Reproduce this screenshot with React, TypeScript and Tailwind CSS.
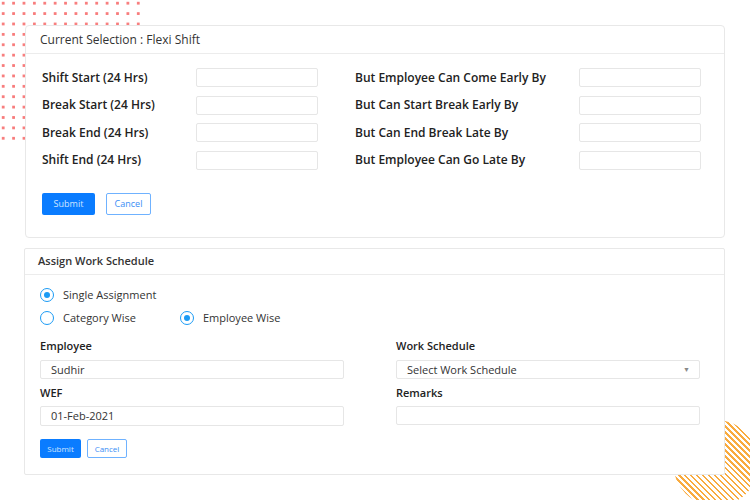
const leftRows = ["Shift Start (24 Hrs)", "Break Start (24 Hrs)", "Break End (24 Hrs)", "Shift End (24 Hrs)"];
const rightRows = [
  "But Employee Can Come Early By",
  "But Can Start Break Early By",
  "But Can End Break Late By",
  "But Employee Can Go Late By",
];

const Radio = ({ checked, label }: { checked?: boolean; label: string }) => (
  <label className="flex h-[14px] items-center gap-[9px] text-[11px] leading-[14px] text-[#333]">
    <span className="flex h-[14px] w-[14px] items-center justify-center rounded-full border-[1.5px] border-[#1b9bf5] bg-white">
      {checked && <span className="h-[6px] w-[6px] rounded-full bg-[#1b9bf5]" />}
    </span>
    {label}
  </label>
);

const FieldRow = ({ label, labelWidth }: { label: string; labelWidth: string }) => (
  <div className="flex h-[19px] items-center">
    <span className={`${labelWidth} text-[12px] font-semibold text-[#222]`}>{label}</span>
    <div className="h-[19px] w-[122px] rounded-[2px] border border-[#e6e6e6] bg-white" />
  </div>
);

export default function App() {
  return (
    <div className="relative h-[500px] w-[750px] overflow-hidden bg-white font-['Open_Sans',sans-serif]">
      {/* decorations */}
      <div className="absolute left-0 top-0 h-[147px] w-[147px] bg-[radial-gradient(circle,#f87c7c_1.3px,transparent_1.7px)] bg-[length:10.4px_10.4px] bg-[position:-2px_-2px]" />
      <div className="absolute left-[673px] top-[420px] h-[86px] w-[86px] rounded-full bg-[repeating-linear-gradient(45deg,#f9ab3f_0px,#f9ab3f_1.7px,transparent_1.7px,transparent_4.2px)]" />

      <div className="relative flex flex-col gap-[10px] pl-[25px] pt-[25px]">
        {/* Card 1 */}
        <div className="h-[213px] w-[700px] rounded-[4px] border border-[#e8e8e8] bg-white">
          <div className="flex h-[28px] items-center border-b border-[#ececec] pl-[14px] text-[12px] font-medium text-[#333]">
            Current Selection : Flexi Shift
          </div>
          <div className="pl-[16px] pr-[23px] pt-[14px]">
            <div className="flex justify-between">
              <div className="flex flex-col gap-[8.6px]">
                {leftRows.map((r) => (
                  <FieldRow key={r} label={r} labelWidth="w-[154px]" />
                ))}
              </div>
              <div className="flex flex-col gap-[8.6px]">
                {rightRows.map((r) => (
                  <FieldRow key={r} label={r} labelWidth="w-[224px]" />
                ))}
              </div>
            </div>
            <div className="mt-[23px] flex gap-[11px]">
              <button className="h-[22px] w-[53px] rounded-[2px] bg-[#0a7cff] text-[9px] text-[#cfe6ff]">Submit</button>
              <button className="h-[22px] w-[45px] rounded-[2px] border border-[#6fb2ff] bg-white text-[9px] text-[#3a8ef5]">
                Cancel
              </button>
            </div>
          </div>
        </div>

        {/* Card 2 */}
        <div className="-ml-[1px] h-[227px] w-[701px] rounded-[2px] border border-[#e8e8e8] bg-white">
          <div className="flex h-[26px] items-center border-b border-[#ececec] pl-[13px] text-[11px] font-semibold text-[#333]">
            Assign Work Schedule
          </div>
          <div className="pl-[15px] pr-[25px] pt-[13px]">
            <div className="flex flex-col gap-[9px]">
              <Radio checked label="Single Assignment" />
              <div className="flex gap-[44px]">
                <Radio label="Category Wise" />
                <Radio checked label="Employee Wise" />
              </div>
            </div>
            <div className="mt-[14px] grid grid-cols-[304px_304px] gap-x-[52px] text-[11px] leading-[14px]">
              <div className="flex flex-col">
                <span className="font-semibold text-[#222]">Employee</span>
                <div className="mt-[7px] flex h-[19px] items-center rounded-[2px] border border-[#e6e6e6] pl-[10px] text-[#333]">
                  Sudhir
                </div>
                <span className="mt-[7px] font-semibold text-[#222]">WEF</span>
                <div className="mt-[6px] flex h-[20px] items-center rounded-[2px] border border-[#e6e6e6] pl-[10px] text-[#333]">
                  01-Feb-2021
                </div>
              </div>
              <div className="flex flex-col">
                <span className="font-semibold text-[#222]">Work Schedule</span>
                <div className="mt-[7px] flex h-[19px] items-center justify-between rounded-[2px] border border-[#e6e6e6] pl-[10px] pr-[9px] text-[#333]">
                  Select Work Schedule
                  <span className="text-[7px] text-[#888]">▼</span>
                </div>
                <span className="mt-[7px] font-semibold text-[#222]">Remarks</span>
                <div className="mt-[6px] h-[19px] rounded-[2px] border border-[#e6e6e6]" />
              </div>
            </div>
            <div className="mt-[13px] flex gap-[6px]">
              <button className="h-[19px] w-[41px] rounded-[2px] bg-[#0a7cff] text-[8px] text-[#cfe6ff]">Submit</button>
              <button className="h-[19px] w-[40px] rounded-[2px] border border-[#6fb2ff] bg-white text-[8px] text-[#3a8ef5]">
                Cancel
              </button>
            </div>
          </div>
        </div>
      </div>
    </div>
  );
}
